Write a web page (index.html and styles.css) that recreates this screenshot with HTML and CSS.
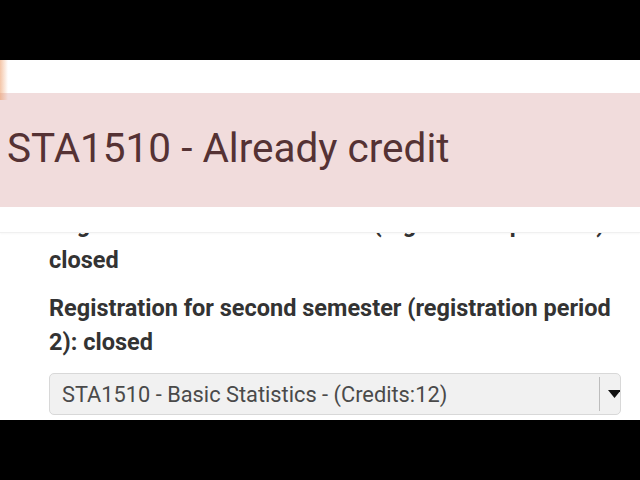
FILE: index.html
```html
<!DOCTYPE html>
<html lang="en">
<head>
<meta charset="utf-8">
<title>Registration</title>
<link rel="stylesheet" href="styles.css">
</head>
<body>
<div class="screen">
  <div class="letterbox"></div>
  <div class="viewport">
    <div class="content">
      <p class="status"><span class="hidden-line">Registration for first semester (registration period 1):</span>closed</p>
      <p class="status">Registration for second semester (registration period<br>2): closed</p>
      <div class="select">
        <span class="select-text">STA1510 - Basic Statistics - (Credits:12)</span>
        <span class="select-sep"></span>
        <svg class="select-arrow" width="12" height="10" viewBox="0 0 12 10"><polygon points="0,1 13,1 6.5,9" fill="#111"/></svg>
      </div>
    </div>
    <div class="topbar">
      <div class="alert"><span class="alert-text">STA1510 - Already credit</span></div>
      <div class="strip"></div>
    </div>
    <div class="smear"></div>
  </div>
  <div class="letterbox"></div>
</div>
</body>
</html>
```
FILE: styles.css
```css
html, body {
  margin: 0;
  padding: 0;
  background: #000;
}
.screen {
  width: 640px;
  height: 480px;
  display: flex;
  flex-direction: column;
  overflow: hidden;
}
.letterbox {
  height: 60px;
  background: #000;
  flex: none;
}
.viewport {
  height: 360px;
  flex: none;
  position: relative;
  overflow: hidden;
  background: #fff;
  font-family: Roboto, "Liberation Sans", sans-serif;
}
.content {
  padding: 149px 0 0 49px;
}
.status {
  margin: 0 0 14px 0;
  font-size: 23.5px;
  line-height: 34px;
  font-weight: 700;
  color: #333;
  white-space: nowrap;
}
.hidden-line {
  display: block;
  line-height: 30px;
  margin-bottom: 4px;
}
.select {
  width: 572px;
  height: 42px;
  box-sizing: border-box;
  border: 1px solid #d8d8d8;
  border-radius: 5px;
  background: #f1f1f1;
  display: flex;
  align-items: center;
  padding-left: 12px;
  position: relative;
}
.select-text {
  font-size: 21.8px;
  color: #4a4a4a;
  flex: 1;
  white-space: nowrap;
}
.select-sep {
  width: 1px;
  height: 34px;
  background: #bdbdbd;
  margin-right: 8px;
}
.select-arrow {
  flex: none;
}
.topbar {
  position: absolute;
  top: 0;
  left: 0;
  right: 0;
  padding-top: 33px;
  background: #fff;
}
.alert {
  height: 114px;
  box-sizing: border-box;
  padding: 0 0 5px 7px;
  background: #f1dcdc;
  display: flex;
  align-items: center;
}
.alert-text {
  font-size: 40.5px;
  color: #553234;
  white-space: nowrap;
}
.strip {
  height: 25px;
  background: #fff;
  border-bottom: 1px solid #f0f0f0;
  box-shadow: 0 1px 2px rgba(0,0,0,0.03);
}
.smear {
  position: absolute;
  left: 0;
  top: 0;
  width: 8px;
  height: 40px;
  background: linear-gradient(to right, rgba(235,150,95,0.55), rgba(255,255,255,0));
}
```
